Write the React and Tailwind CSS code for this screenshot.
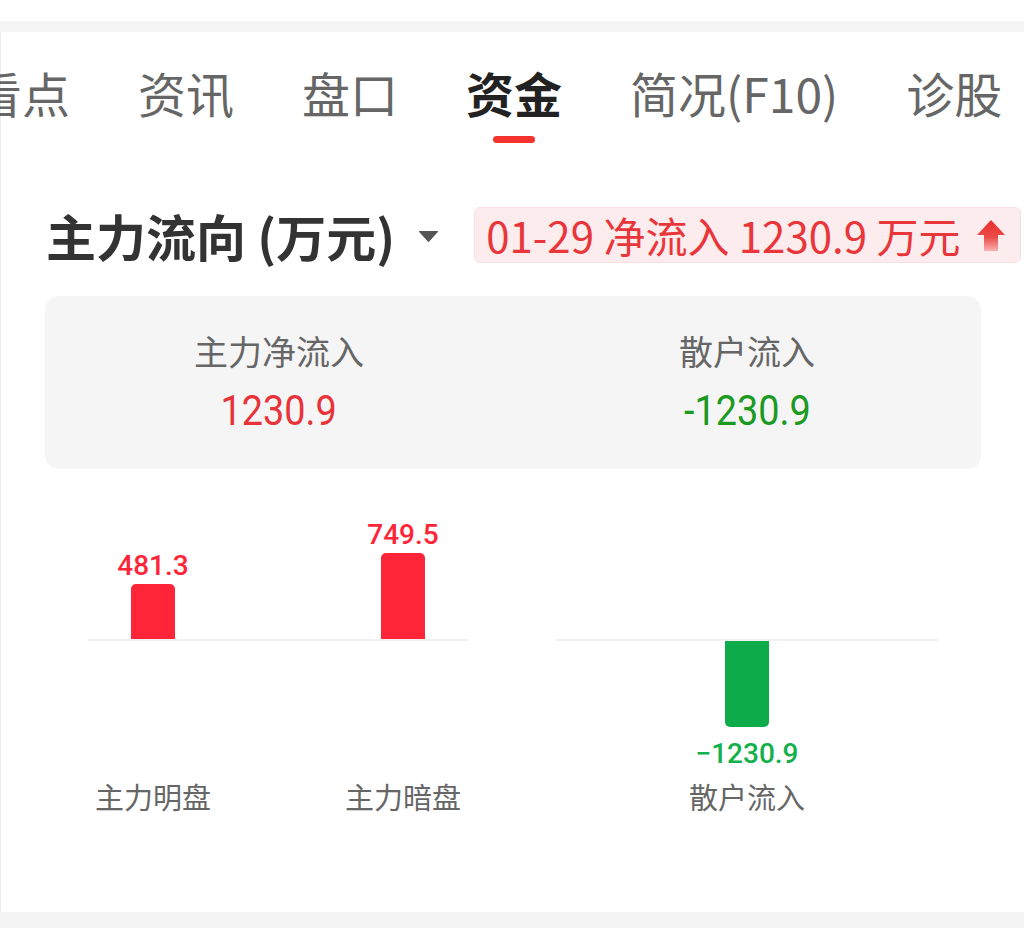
import React from "react";

const tabs = ["看点", "资讯", "盘口", "资金", "简况(F10)", "诊股"];

function UpArrow() {
  return (
    <svg width="30" height="33" viewBox="0 0 30 33">
      <defs>
        <linearGradient id="ua" x1="0" y1="0" x2="0" y2="1">
          <stop offset="0" stopColor="#e8302c" />
          <stop offset="0.55" stopColor="#ec4a48" />
          <stop offset="1" stopColor="#f7b3b3" />
        </linearGradient>
      </defs>
      <path d="M15 1 L29 16 L22 16 L22 32 L8 32 L8 16 L1 16 Z" fill="url(#ua)" strokeLinejoin="round" />
    </svg>
  );
}

function Caret() {
  return (
    <svg width="21" height="13" viewBox="0 0 21 13">
      <path d="M1.5 1 L19.5 1 Q20.5 1 19.8 2 L11.2 11.5 Q10.5 12.3 9.8 11.5 L1.2 2 Q0.5 1 1.5 1 Z" fill="#555" />
    </svg>
  );
}

const num = "font-['Roboto',sans-serif]";

export default function App() {
  return (
    <div className="w-[1024px] h-[933px] bg-white flex flex-col overflow-hidden font-['Noto_Sans_CJK_SC','Noto_Sans',sans-serif]">
      <div className="h-[21px] shrink-0" />
      <div className="h-[11px] shrink-0 bg-[#f5f5f5]" />
      <div className="flex-1 flex flex-col border-l border-[#ededed]">
        {/* Tabs */}
        <div className="pt-[32px] flex gap-[68px] ml-[-27px]">
          {tabs.map((t) => {
            const active = t === "资金";
            return (
              <div key={t} className="flex flex-col items-center shrink-0">
                <div
                  className={
                    "text-[48px] leading-[56px] whitespace-nowrap " +
                    (active ? "text-[#222] font-semibold" : "text-[#666]")
                  }
                >
                  {t}
                </div>
                <div
                  className={
                    "mt-[16px] h-[7px] w-[42px] rounded-full " +
                    (active ? "bg-[#f4332e]" : "bg-transparent")
                  }
                />
              </div>
            );
          })}
        </div>

        {/* Title row */}
        <div className="mt-[64px] flex items-center pl-[45px]">
          <div className="text-[50px] leading-[56px] font-semibold text-[#333] whitespace-nowrap">
            主力流向 (万元)
          </div>
          <div className="ml-[23px] mt-[2px] flex items-center">
            <Caret />
          </div>
          <div className="ml-[35px] w-[547px] h-[56px] rounded-[6px] bg-[#fdeced] border border-[#fbe0e0] flex items-center justify-between pl-[11px] pr-[14px]">
            <span className="text-[42px] leading-[46px] text-[#e8363a] whitespace-nowrap">
              01-29 净流入 1230.9 万元
            </span>
            <UpArrow />
          </div>
        </div>

        {/* Summary card */}
        <div className="mt-[33px] ml-[44px] w-[936px] h-[173px] rounded-[14px] bg-[#f5f5f5] grid grid-cols-2 pt-[33px]">
          <div className="flex flex-col items-center">
            <div className="text-[34px] leading-[44px] text-[#666]">主力净流入</div>
            <div className={"mt-[14px] text-[42px] leading-[48px] text-[#e8333a] " + num}>
              <span className="inline-block scale-x-90">1230.9</span>
            </div>
          </div>
          <div className="flex flex-col items-center">
            <div className="text-[34px] leading-[44px] text-[#666]">散户流入</div>
            <div className={"mt-[14px] text-[42px] leading-[48px] text-[#1b9a22] " + num}>
              <span className="inline-block scale-x-90">-1230.9</span>
            </div>
          </div>
        </div>

        {/* Chart */}
        <div className="flex pl-[87px] gap-[88px]">
          {/* group 1 */}
          <div className="w-[380px] flex flex-col">
            <div className="h-[170px] flex justify-between items-end px-[43px]">
              <div className="w-[44px] flex flex-col items-center">
                <div className={"text-[28px] leading-[32px] font-medium text-[#ff2538] whitespace-nowrap mb-[2px] " + num}>481.3</div>
                <div className="w-[44px] h-[55px] rounded-t-[5px] bg-[#ff2538]" />
              </div>
              <div className="w-[44px] flex flex-col items-center">
                <div className={"text-[28px] leading-[32px] font-medium text-[#ff2538] whitespace-nowrap mb-[2px] " + num}>749.5</div>
                <div className="w-[44px] h-[86px] rounded-t-[5px] bg-[#ff2538]" />
              </div>
            </div>
            <div className="h-[2px] bg-[#f1f1f1]" />
            <div className="h-[137px]" />
            <div className="flex justify-between px-[43px]">
              <div className="w-[44px] flex justify-center">
                <span className="text-[29px] leading-[36px] text-[#666] whitespace-nowrap">主力明盘</span>
              </div>
              <div className="w-[44px] flex justify-center">
                <span className="text-[29px] leading-[36px] text-[#666] whitespace-nowrap">主力暗盘</span>
              </div>
            </div>
          </div>
          {/* group 2 */}
          <div className="w-[382px] flex flex-col">
            <div className="h-[170px]" />
            <div className="h-[2px] bg-[#f1f1f1]" />
            <div className="h-[137px] flex flex-col items-center">
              <div className="w-[44px] h-[86px] rounded-b-[5px] bg-[#0dab4a]" />
              <div className={"mt-[11px] text-[28px] leading-[32px] font-medium text-[#13b04b] whitespace-nowrap " + num}>−1230.9</div>
            </div>
            <div className="flex justify-center">
              <span className="text-[29px] leading-[36px] text-[#666] whitespace-nowrap">散户流入</span>
            </div>
          </div>
        </div>
        <div className="flex-1" />
      </div>
      <div className="h-[16px] shrink-0 bg-[#f4f4f4]" />
      <div className="h-[5px] shrink-0" />
    </div>
  );
}
